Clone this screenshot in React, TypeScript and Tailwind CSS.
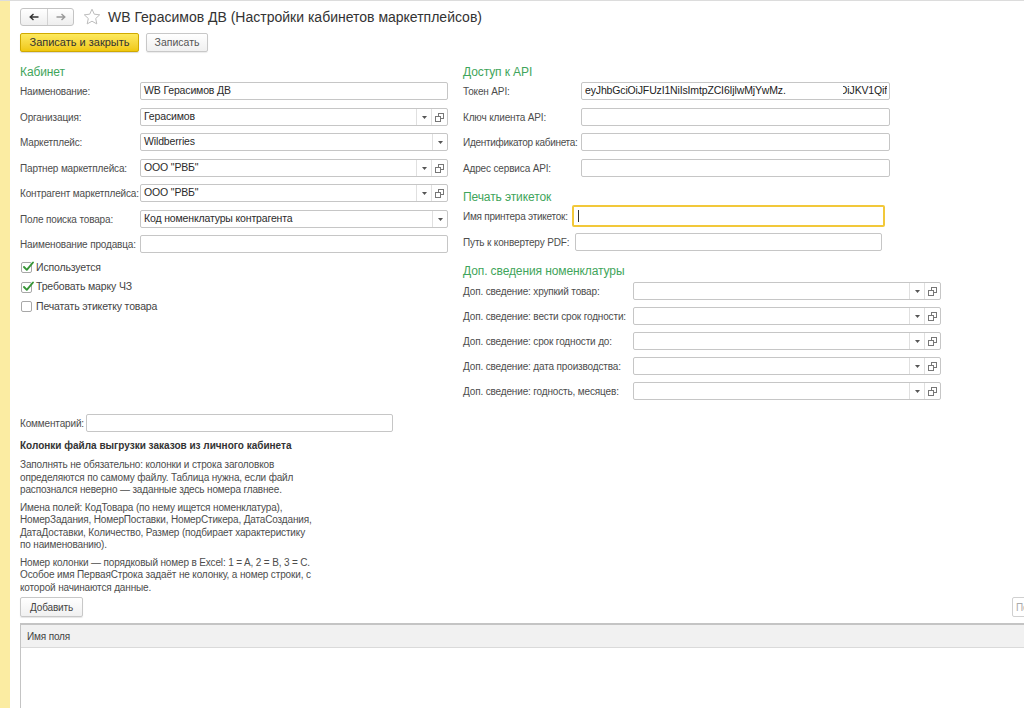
import React from "react";

function Tri() {
  return (
    <svg width="5" height="3" viewBox="0 0 5 3">
      <path d="M0 0h5L2.5 3z" fill="#555" />
    </svg>
  );
}

function OpenIcon() {
  return (
    <svg width="9" height="9" viewBox="0 0 9 9">
      <rect x="3.5" y="0.5" width="5" height="5" fill="none" stroke="#777" />
      <rect x="0.5" y="3.5" width="5" height="5" fill="#fff" stroke="#777" />
    </svg>
  );
}

function CheckMark() {
  return (
    <svg width="13" height="13" viewBox="0 0 13 13" className="absolute left-[0px] top-[-3px]">
      <path d="M2 7l2.8 2.8L11 2.5" fill="none" stroke="#369636" strokeWidth="1.9" strokeLinecap="round" strokeLinejoin="round" />
    </svg>
  );
}

function Combo({ w, value, open = true }: { w: string; value?: string; open?: boolean }) {
  return (
    <div className={`flex h-[18px] border border-[#c6c6c6] rounded-[2px] bg-white ${w}`}>
      <div className="flex-1 min-w-0 px-[3px] flex items-center text-[#2b2b2b] text-[10.5px] whitespace-nowrap overflow-hidden">
        {value}
      </div>
      <div className="w-[15px] border-l border-[#e0e0e0] flex items-center justify-center">
        <Tri />
      </div>
      {open && (
        <div className="w-[16px] border-l border-[#e0e0e0] flex items-center justify-center">
          <OpenIcon />
        </div>
      )}
    </div>
  );
}

function TextBox({ w, value }: { w: string; value?: string }) {
  return (
    <div
      className={`h-[18px] border border-[#c6c6c6] rounded-[2px] bg-white px-[3px] flex items-center text-[#2b2b2b] text-[10.5px] whitespace-nowrap overflow-hidden ${w}`}
    >
      {value}
    </div>
  );
}

function Heading({ children, cls }: { children: React.ReactNode; cls: string }) {
  return (
    <div className={`h-[16px] leading-[16px] text-[12px] tracking-[-0.1px] text-[#3fa55b] ${cls}`}>{children}</div>
  );
}

function CheckRow({ label, checked }: { label: string; checked: boolean }) {
  return (
    <div className="flex items-center h-[19.5px]">
      <div className="relative w-[11px] h-[11px] ml-[1px] border border-[#a8a8a8] rounded-[2px] bg-white">
        {checked && <CheckMark />}
      </div>
      <span className="ml-[4px] text-[10.5px] text-[#444]">{label}</span>
    </div>
  );
}

export default function App() {
  return (
    <div className="flex w-[1024px] h-[708px] overflow-hidden bg-white border-t border-[#dcdcdc] font-['Liberation_Sans',Arial,sans-serif] text-[10px] tracking-[-0.15px] text-[#4d4d4d]">
      <div className="w-[10px] shrink-0 bg-[#fbeca2]" />
      <div className="flex flex-col flex-1 min-w-0 pl-[10px]">
        {/* title bar */}
        <div className="flex items-center h-[18px] mt-[7px]">
          <div className="flex h-[18px] w-[54px] border border-[#c4c4c4] rounded-[3px] bg-gradient-to-b from-white to-[#eeeeee]">
            <div className="w-[27px] flex items-center justify-center border-r border-[#d2d2d2]">
              <svg width="10" height="8" viewBox="0 0 10 8">
                <path d="M9.5 4H1.5M4.5 1L1.2 4l3.3 3" fill="none" stroke="#333" strokeWidth="1.4" />
              </svg>
            </div>
            <div className="flex-1 flex items-center justify-center">
              <svg width="10" height="8" viewBox="0 0 10 8">
                <path d="M0.5 4h8M5.5 1l3.3 3-3.3 3" fill="none" stroke="#9a9a9a" strokeWidth="1.4" />
              </svg>
            </div>
          </div>
          <svg width="18" height="18" viewBox="0 0 18 18" className="ml-[9px]">
            <path
              d="M9 1.2l2.3 5 5.4.6-4 3.7 1.1 5.4L9 13.2l-4.8 2.7 1.1-5.4-4-3.7 5.4-.6z"
              fill="none"
              stroke="#bdbdbd"
              strokeWidth="1"
              strokeLinejoin="round"
            />
          </svg>
          <div className="ml-[7px] text-[14px] tracking-[0px] text-[#333] whitespace-nowrap">
            WB Герасимов ДВ (Настройки кабинетов маркетплейсов)
          </div>
        </div>

        {/* command bar */}
        <div className="flex gap-[7px] mt-[7px] text-[11px] tracking-[0px]">
          <div className="h-[19px] w-[119px] flex items-center justify-center rounded-[2px] border border-[#d0a900] bg-gradient-to-b from-[#fde95c] to-[#f0c80a] shadow-[0_1px_1px_rgba(0,0,0,0.15)] text-[#333]">
            Записать и закрыть
          </div>
          <div className="h-[19px] w-[62px] flex items-center justify-center rounded-[2px] border border-[#c8c8c8] bg-gradient-to-b from-white to-[#f0f0f0] shadow-[0_1px_1px_rgba(0,0,0,0.08)] text-[10.5px] text-[#555]">
            Записать
          </div>
        </div>

        {/* two columns */}
        <div className="flex mt-[12px]">
          {/* left column */}
          <div className="w-[428px] shrink-0 flex flex-col">
            <Heading cls="">Кабинет</Heading>
            <div className="flex items-center mt-[2px]">
              <div className="w-[120px] shrink-0 whitespace-nowrap">Наименование:</div>
              <TextBox w="flex-1" value="WB Герасимов ДВ" />
            </div>
            <div className="flex items-center mt-[8px]">
              <div className="w-[120px] shrink-0 whitespace-nowrap">Организация:</div>
              <Combo w="flex-1" value="Герасимов" />
            </div>
            <div className="flex items-center mt-[7px]">
              <div className="w-[120px] shrink-0 whitespace-nowrap">Маркетплейс:</div>
              <Combo w="flex-1" value="Wildberries" open={false} />
            </div>
            <div className="flex items-center mt-[8px]">
              <div className="w-[120px] shrink-0 whitespace-nowrap">Партнер маркетплейса:</div>
              <Combo w="flex-1" value={'ООО "РВБ"'} />
            </div>
            <div className="flex items-center mt-[7px]">
              <div className="w-[120px] shrink-0 whitespace-nowrap">Контрагент маркетплейса:</div>
              <Combo w="flex-1" value={'ООО "РВБ"'} />
            </div>
            <div className="flex items-center mt-[8px]">
              <div className="w-[120px] shrink-0 whitespace-nowrap">Поле поиска товара:</div>
              <Combo w="flex-1" value="Код номенклатуры контрагента" open={false} />
            </div>
            <div className="flex items-center mt-[7px]">
              <div className="w-[120px] shrink-0 whitespace-nowrap">Наименование продавца:</div>
              <TextBox w="flex-1" />
            </div>
            <div className="mt-[5px] flex flex-col">
              <CheckRow label="Используется" checked />
              <CheckRow label="Требовать марку ЧЗ" checked />
              <CheckRow label="Печатать этикетку товара" checked={false} />
            </div>
          </div>

          {/* right column */}
          <div className="w-[478px] shrink-0 ml-[15px] flex flex-col">
            <Heading cls="">Доступ к API</Heading>
            <div className="flex items-center mt-[2px]">
              <div className="w-[118px] shrink-0 whitespace-nowrap">Токен API:</div>
              <div className="w-[309px] h-[18px] border border-[#c6c6c6] rounded-[2px] bg-white pl-[3px] pr-[2px] flex items-center justify-between text-[#222] text-[10.5px] whitespace-nowrap overflow-hidden">
                <span>eyJhbGciOiJFUzI1NiIsImtpZCI6IjlwMjYwMz.</span>
                <span className="w-[44px] flex justify-end overflow-hidden">
                  <span>OiJKV1Qif</span>
                </span>
              </div>
            </div>
            <div className="flex items-center mt-[8px]">
              <div className="w-[118px] shrink-0 whitespace-nowrap">Ключ клиента API:</div>
              <TextBox w="w-[309px]" />
            </div>
            <div className="flex items-center mt-[7px]">
              <div className="w-[118px] shrink-0 whitespace-nowrap tracking-[-0.3px]">Идентификатор кабинета:</div>
              <TextBox w="w-[309px]" />
            </div>
            <div className="flex items-center mt-[8px]">
              <div className="w-[118px] shrink-0 whitespace-nowrap">Адрес сервиса API:</div>
              <TextBox w="w-[309px]" />
            </div>

            <Heading cls="mt-[12px]">Печать этикеток</Heading>
            <div className="flex items-center">
              <div className="w-[109px] shrink-0 whitespace-nowrap tracking-[-0.25px]">Имя принтера этикеток:</div>
              <div className="w-[313px] h-[22px] border-2 border-[#f2c83a] rounded-[2px] bg-white flex items-center pl-[4px]">
                <div className="w-[1px] h-[12px] bg-[#333]" />
              </div>
            </div>
            <div className="flex items-center mt-[6px]">
              <div className="w-[112px] shrink-0 whitespace-nowrap">Путь к конвертеру PDF:</div>
              <TextBox w="w-[307px]" />
            </div>

            <Heading cls="mt-[12px]">Доп. сведения номенклатуры</Heading>
            <div className="flex items-center mt-[3px]">
              <div className="w-[170px] shrink-0 whitespace-nowrap">Доп. сведение: хрупкий товар:</div>
              <Combo w="w-[308px]" />
            </div>
            <div className="flex items-center mt-[7px]">
              <div className="w-[170px] shrink-0 whitespace-nowrap">Доп. сведение: вести срок годности:</div>
              <Combo w="w-[308px]" />
            </div>
            <div className="flex items-center mt-[7px]">
              <div className="w-[170px] shrink-0 whitespace-nowrap">Доп. сведение: срок годности до:</div>
              <Combo w="w-[308px]" />
            </div>
            <div className="flex items-center mt-[7px]">
              <div className="w-[170px] shrink-0 whitespace-nowrap">Доп. сведение: дата производства:</div>
              <Combo w="w-[308px]" />
            </div>
            <div className="flex items-center mt-[7px]">
              <div className="w-[170px] shrink-0 whitespace-nowrap">Доп. сведение: годность, месяцев:</div>
              <Combo w="w-[308px]" />
            </div>
          </div>
        </div>

        {/* comment */}
        <div className="flex items-center mt-[14px]">
          <div className="w-[66px] shrink-0 whitespace-nowrap">Комментарий:</div>
          <TextBox w="w-[307px]" />
        </div>

        {/* order file columns */}
        <div className="mt-[7px] h-[13px] leading-[13px] font-bold tracking-[0px] text-[#333]">
          Колонки файла выгрузки заказов из личного кабинета
        </div>
        <div className="mt-[7px] leading-[12.5px] whitespace-nowrap">
          <div>Заполнять не обязательно: колонки и строка заголовков</div>
          <div>определяются по самому файлу. Таблица нужна, если файл</div>
          <div>распознался неверно — заданные здесь номера главнее.</div>
        </div>
        <div className="mt-[5px] leading-[12.5px] whitespace-nowrap">
          <div>Имена полей: КодТовара (по нему ищется номенклатура),</div>
          <div>НомерЗадания, НомерПоставки, НомерСтикера, ДатаСоздания,</div>
          <div>ДатаДоставки, Количество, Размер (подбирает характеристику</div>
          <div>по наименованию).</div>
        </div>
        <div className="mt-[5px] leading-[12.5px] whitespace-nowrap">
          <div>Номер колонки — порядковый номер в Excel: 1 = A, 2 = B, 3 = C.</div>
          <div>Особое имя ПерваяСтрока задаёт не колонку, а номер строки, с</div>
          <div>которой начинаются данные.</div>
        </div>

        {/* table toolbar */}
        <div className="flex justify-between w-[1052px] mt-[3px]">
          <div className="h-[20px] w-[63px] flex items-center justify-center rounded-[2px] border border-[#c8c8c8] bg-gradient-to-b from-white to-[#f0f0f0] shadow-[0_1px_1px_rgba(0,0,0,0.1)] text-[#444]">
            Добавить
          </div>
          <div className="h-[20px] w-[60px] flex items-center pl-[3px] rounded-[2px] border border-[#d0d0d0] bg-white text-[#aaa]">
            Поиск
          </div>
        </div>

        {/* table */}
        <div className="flex-1 flex flex-col w-[1020px] mt-[6px] border-t-2 border-l border-[#c4c4c4]">
          <div className="h-[23px] flex items-center pl-[6px] bg-[#f1f1f1] border-b border-[#dadada] text-[#444]">
            Имя поля
          </div>
          <div className="flex-1 bg-white" />
        </div>
      </div>
    </div>
  );
}
